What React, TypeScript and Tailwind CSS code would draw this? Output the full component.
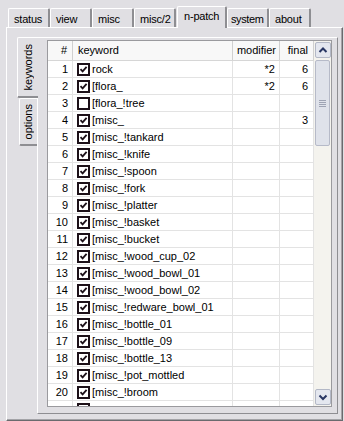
import React from "react";

type Row = {
  n: number;
  keyword: string;
  checked: boolean;
  modifier?: string;
  final?: string;
};

const rows: Row[] = [
  { n: 1, keyword: "rock", checked: true, modifier: "*2", final: "6" },
  { n: 2, keyword: "[flora_", checked: true, modifier: "*2", final: "6" },
  { n: 3, keyword: "[flora_!tree", checked: false },
  { n: 4, keyword: "[misc_", checked: true, final: "3" },
  { n: 5, keyword: "[misc_!tankard", checked: true },
  { n: 6, keyword: "[misc_!knife", checked: true },
  { n: 7, keyword: "[misc_!spoon", checked: true },
  { n: 8, keyword: "[misc_!fork", checked: true },
  { n: 9, keyword: "[misc_!platter", checked: true },
  { n: 10, keyword: "[misc_!basket", checked: true },
  { n: 11, keyword: "[misc_!bucket", checked: true },
  { n: 12, keyword: "[misc_!wood_cup_02", checked: true },
  { n: 13, keyword: "[misc_!wood_bowl_01", checked: true },
  { n: 14, keyword: "[misc_!wood_bowl_02", checked: true },
  { n: 15, keyword: "[misc_!redware_bowl_01", checked: true },
  { n: 16, keyword: "[misc_!bottle_01", checked: true },
  { n: 17, keyword: "[misc_!bottle_09", checked: true },
  { n: 18, keyword: "[misc_!bottle_13", checked: true },
  { n: 19, keyword: "[misc_!pot_mottled", checked: true },
  { n: 20, keyword: "[misc_!broom", checked: true },
];

const tabs = ["status", "view", "misc", "misc/2", "n-patch", "system", "about"];

function CheckBox({ checked }: { checked: boolean }) {
  return (
    <svg width="13" height="13" viewBox="0 0 13 13" className="shrink-0">
      <rect x="1" y="1" width="11" height="11" fill="#fff" stroke="#1c1018" strokeWidth="2" />
      {checked && (
        <path d="M3.5 6.2 L5.6 8.4 L9.6 3.8" fill="none" stroke="#1c1018" strokeWidth="1.8" />
      )}
    </svg>
  );
}

function ScrollButton({ up }: { up: boolean }) {
  return (
    <div className="w-[16px] h-[16px] mx-auto rounded-[2px] border border-[#b3b8c6] bg-[#e4e7ef] flex items-center justify-center">
      <svg width="10" height="8" viewBox="0 0 10 8">
        <path
          d={up ? "M1.5 6 L5 2.5 L8.5 6" : "M1.5 2.5 L5 6 L8.5 2.5"}
          fill="none"
          stroke="#283663"
          strokeWidth="2"
        />
      </svg>
    </div>
  );
}

export default function App() {
  return (
    <div className="w-[344px] h-[421px] bg-[#e0dfe3] overflow-hidden font-['Liberation_Sans',Arial,sans-serif] text-[11px] text-black">
      {/* top tabs */}
      <div className="h-[27px] flex items-end pl-[8px] tracking-[-0.2px]">
        {tabs.map((t) =>
          t === "n-patch" ? (
            <div
              key={t}
              className="relative z-10 w-[50px] h-[22px] -mb-[1px] ml-[1px] bg-[#e0dfe3] border-l border-t border-white border-r-2 border-r-[#8e8e92] rounded-t-[2px] pl-[6px] pt-[2px] leading-[14px]"
            >
              {t}
            </div>
          ) : (
            <div
              key={t}
              className={
                t === "system"
                  ? "w-[42px] h-[19px] bg-[#e0dfe3] border-l border-t border-white border-r-2 border-r-[#8e8e92] rounded-t-[2px] pl-[3px] pt-[3px] leading-[14px] tracking-[-0.4px] whitespace-nowrap"
                  : "w-[42px] h-[19px] bg-[#e0dfe3] border-l border-t border-white border-r-2 border-r-[#8e8e92] rounded-t-[2px] pl-[5px] pt-[3px] leading-[14px] whitespace-nowrap"
              }
            >
              {t}
            </div>
          )
        )}
      </div>

      {/* outer panel */}
      <div className="ml-[6px] w-[337px] h-[394px] border-l border-t border-white border-r border-b border-r-[#6a6a6e] border-b-[#6a6a6e] shadow-[inset_-1px_-1px_0_#a3a3a7] pl-[10px] pt-[9px] flex items-start">
        {/* vertical tabs */}
        <div className="flex flex-col w-[20px]">
          <div className="relative z-10 w-[21px] h-[61px] bg-[#e0dfe3] border-l border-t border-white border-b-2 border-b-[#8e8e92] rounded-l-[2px] flex items-center justify-center">
            <span className="[writing-mode:vertical-rl] rotate-180 leading-[13px]">keywords</span>
          </div>
          <div className="ml-[2px] w-[18px] h-[48px] bg-[#e0dfe3] border-l border-t border-white border-b-2 border-b-[#8e8e92] rounded-l-[2px] flex items-center justify-center">
            <span className="[writing-mode:vertical-rl] rotate-180 leading-[13px]">options</span>
          </div>
        </div>

        {/* inner panel */}
        <div className="w-[301px] h-[377px] border-l border-t border-white border-r border-b border-r-[#8e8e92] border-b-[#8e8e92] pl-[9px] pt-[2px]">
          {/* list view */}
          <div className="w-[285px] h-[367px] border border-[#9a9a9e] bg-white flex overflow-hidden">
            <div className="w-[266px] flex flex-col">
              {/* header */}
              <div className="h-[20px] flex shrink-0 bg-[#f8f8f8] border-b border-[#d6d6d6] leading-[19px]">
                <div className="w-[25px] border-r border-[#d0d0d0] text-right pr-[5px]">#</div>
                <div className="w-[160px] border-r border-[#d0d0d0] pl-[5px]">keyword</div>
                <div className="w-[47px] border-r border-[#d0d0d0] text-right pr-[3px]">modifier</div>
                <div className="w-[34px] border-r border-[#d0d0d0] text-right pr-[5px]">final</div>
              </div>
              {/* rows */}
              {rows.map((r) => (
                <div key={r.n} className="h-[17px] flex shrink-0 border-b border-[#e3e3e3] leading-[16px]">
                  <div className="w-[25px] border-r border-[#e3e3e3] text-right pr-[4px]">{r.n}</div>
                  <div className="w-[160px] border-r border-[#e3e3e3] pl-[4px] flex items-center gap-[2px] whitespace-nowrap overflow-hidden">
                    <CheckBox checked={r.checked} />
                    <span>{r.keyword}</span>
                  </div>
                  <div className="w-[47px] border-r border-[#e3e3e3] text-right pr-[4px]">{r.modifier}</div>
                  <div className="w-[34px] border-r border-[#e3e3e3] text-right pr-[5px]">{r.final}</div>
                </div>
              ))}
              <div className="h-[17px] flex shrink-0">
                <div className="w-[25px] border-r border-[#e3e3e3]" />
                <div className="w-[160px] border-r border-[#e3e3e3] pl-[4px] pt-[2px]">
                  <CheckBox checked={true} />
                </div>
                <div className="w-[47px] border-r border-[#e3e3e3]" />
                <div className="w-[34px] border-r border-[#e3e3e3]" />
              </div>
            </div>

            {/* scrollbar */}
            <div className="w-[17px] h-full bg-[#f4f3ee] flex flex-col pt-[1px] pb-[1px]">
              <ScrollButton up={true} />
              <div className="flex-1 flex flex-col pt-[2px]">
                <div className="w-[15px] h-[86px] mx-auto rounded-[2px] border border-[#b6bac8] bg-[#dfe2ea] flex flex-col items-center justify-center gap-[1px]">
                  <div className="w-[7px] h-[1px] bg-[#9ea3b3]" />
                  <div className="w-[7px] h-[1px] bg-[#9ea3b3]" />
                  <div className="w-[7px] h-[1px] bg-[#9ea3b3]" />
                  <div className="w-[7px] h-[1px] bg-[#9ea3b3]" />
                </div>
              </div>
              <ScrollButton up={false} />
            </div>
          </div>
        </div>
      </div>
    </div>
  );
}
